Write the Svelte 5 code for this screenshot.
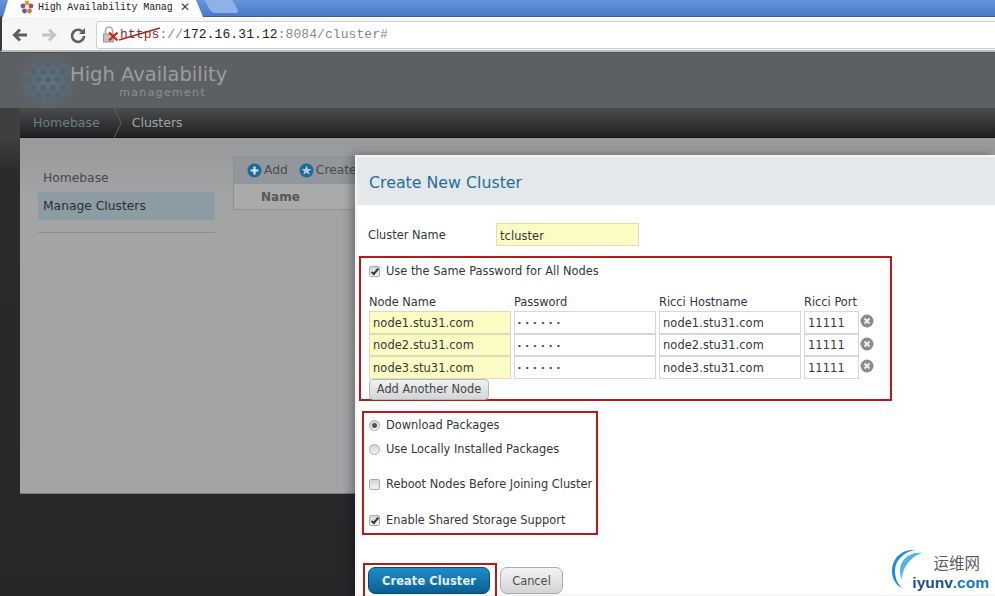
<script>
  const nodes = [
    { name: "node1.stu31.com", port: "11111" },
    { name: "node2.stu31.com", port: "11111" },
    { name: "node3.stu31.com", port: "11111" }
  ];
  // logo dots, laid out as a rounded honeycomb
  const rows = [3, 4, 5, 4, 3];
  const dots = [];
  rows.forEach((count, r) => {
    for (let c = 0; c < count; c++) {
      dots.push({ x: 28 + (c - (count - 1) / 2) * 9.5, y: 11 + r * 7.8 });
    }
  });
</script>

<div class="browser">
  <div class="tabstrip">
    <div class="tab">
      <svg class="favicon" width="14" height="14" viewBox="0 0 14 14">
        <circle cx="7" cy="3" r="2.4" fill="#c9a23c" />
        <circle cx="11" cy="6" r="2.4" fill="#a8506e" />
        <circle cx="9.5" cy="11" r="2.4" fill="#c77a3a" />
        <circle cx="4.5" cy="11" r="2.4" fill="#6a5aa0" />
        <circle cx="3" cy="6" r="2.4" fill="#8f4a8a" />
        <circle cx="7" cy="7" r="1.5" fill="#e8e2d8" />
      </svg>
      <span class="tab-title">High Availability Manag</span>
      <span class="tab-close">✕</span>
    </div>
    <div class="tab-new"></div>
  </div>

  <div class="toolbar">
    <svg class="nav-icon" width="18" height="16" viewBox="0 0 18 16">
      <path d="M16 8H4M9 2.5 3.5 8 9 13.5" fill="none" stroke="#5c5f61" stroke-width="3" />
    </svg>
    <svg class="nav-icon" width="18" height="16" viewBox="0 0 18 16">
      <path d="M2 8h12M9 2.5 14.500 8 9 13.5" fill="none" stroke="#c2c4c5" stroke-width="3" />
    </svg>
    <svg class="nav-icon reload" width="18" height="18" viewBox="0 0 18 18">
      <path d="M14 6.500A6 6 0 1 0 15 10" fill="none" stroke="#5c5f61" stroke-width="2.600" />
      <path d="M16 2v6h-6z" fill="#5c5f61" />
    </svg>
    <div class="urlbar">
      <svg class="lock" width="16" height="18" viewBox="0 0 16 18">
        <path d="M2.500 8V4.500a3.500 3.500 0 0 1 7 0V8" fill="none" stroke="#a9a9a6" stroke-width="1.600" />
        <rect x="0.500" y="8" width="10" height="8" fill="#c4c3bd" stroke="#999" />
        <path d="M6 6.500l8.500 8M14.500 6.500 6 14.500" stroke="#c8281e" stroke-width="2.200" />
      </svg>
      <span class="url">
        <span class="scheme">https<svg class="strike" width="44" height="14" viewBox="0 0 44 14"><path d="M1 13 42 1" stroke="#a8262a" stroke-width="1.500" /></svg></span><span class="dim">://</span>172.16.31.12<span class="dim">:8084/cluster#</span>
      </span>
    </div>
  </div>

  <div class="page">
    <header class="brand">
      <svg class="brand-mark" width="62" height="56" viewBox="0 0 62 56">
        <defs>
          <radialGradient id="glow">
            <stop offset="0" stop-color="#5f7a8c" stop-opacity="0.85" />
            <stop offset="1" stop-color="#5f7a8c" stop-opacity="0" />
          </radialGradient>
        </defs>
        <ellipse cx="28" cy="28" rx="30" ry="28" fill="url(#glow)" />
        {#each dots as d}
          <circle cx={d.x} cy={d.y} r="3.200" fill="#54636d" />
        {/each}
      </svg>
      <div class="brand-text">
        <div class="brand-name">High Availability</div>
        <div class="brand-sub">management</div>
      </div>
    </header>

    <nav class="crumbs">
      <span class="crumb-home">Homebase</span>
      <svg class="crumb-sep" width="10" height="30" viewBox="0 0 10 30">
        <path d="M1 0 8 15 1 30" fill="none" stroke="#5d5f60" />
      </svg>
      <span class="crumb-current">Clusters</span>
    </nav>

    <main class="panel">
      <aside class="sidebar">
        <div class="side-item">Homebase</div>
        <div class="side-item active">Manage Clusters</div>
        <div class="side-rule"></div>
      </aside>
      <section class="table">
        <div class="table-tools">
          <svg width="15" height="15" viewBox="0 0 15 15">
            <circle cx="7.500" cy="7.500" r="7" fill="#1c6a9c" />
            <path d="M7.500 3.500v8M3.500 7.500h8" stroke="#dfe6ea" stroke-width="2.200" />
          </svg>
          <span class="tool-label">Add</span>
          <svg class="tool-gap" width="15" height="15" viewBox="0 0 15 15">
            <circle cx="7.500" cy="7.500" r="7" fill="#1c6a9c" />
            <path d="M7.500 2.500 9 6h3.500l-2.800 2.200 1 3.500-3.200-2-3.200 2 1-3.500L2.500 6H6z" fill="#b9c6cf" />
          </svg>
          <span class="tool-label">Create</span>
        </div>
        <div class="table-head">Name</div>
      </section>
    </main>

    <div class="modal">
      <h2 class="modal-title">Create New Cluster</h2>
      <div class="modal-body">
        <div class="cluster-name">
          <span class="cluster-label">Cluster Name</span>
          <input class="field yellow cluster-input" value="tcluster" />
        </div>

        <div class="mark nodes-box">
          <label class="opt same-pw"><span class="check on"></span>Use the Same Password for All Nodes</label>
          <div class="node-grid">
            <span class="col">Node Name</span>
            <span class="col">Password</span>
            <span class="col">Ricci Hostname</span>
            <span class="col">Ricci Port</span>
            <span></span>
            {#each nodes as n}
              <input class="field yellow" value={n.name} />
              <input class="field pw" type="password" value="secret" />
              <input class="field" value={n.name} />
              <input class="field" value={n.port} />
              <svg class="remove" width="14" height="14" viewBox="0 0 14 14">
                <circle cx="7" cy="7" r="6.500" fill="#8b8b8b" />
                <path d="M4.500 4.500l5 5M9.500 4.500l-5 5" stroke="#eee" stroke-width="2" />
              </svg>
            {/each}
          </div>
          <button class="btn add-node">Add Another Node</button>
        </div>

        <div class="mark options-box">
          <label class="opt"><span class="radio on"></span>Download Packages</label>
          <label class="opt second"><span class="radio"></span>Use Locally Installed Packages</label>
          <label class="opt spaced"><span class="check"></span>Reboot Nodes Before Joining Cluster</label>
          <label class="opt spaced"><span class="check on"></span>Enable Shared Storage Support</label>
        </div>

        <div class="actions">
          <div class="mark action-box"><button class="btn primary">Create Cluster</button></div>
          <button class="btn cancel">Cancel</button>
        </div>
      </div>

      <div class="watermark">
        <svg class="wm-logo" width="40" height="44" viewBox="0 0 40 44">
          <path d="M23 2C8 1 0 12 0 23c0 8 4 14 10 17C5 35 3 29 3 23 3 12 12 4 23 2z" fill="#1d8fd0" />
          <path d="M30 5C18 3 8 12 8 22c0 4 1 7 2 10C10 20 18 9 30 5z" fill="#56b3e2" />
        </svg>
        <div class="wm-text">
          <span class="wm-cn">运维网</span>
          <span class="wm-en"><b>iyunv</b>.com</span>
        </div>
      </div>
    </div>
  </div>
</div>

<style>
  :global(body) {
    margin: 0;
    background: #262729;
    overflow: hidden;
  }

  .browser {
    width: 995px;
    height: 596px;
    overflow: hidden;
    display: flex;
    flex-direction: column;
    font-family: "DejaVu Sans", sans-serif;
  }

  .tabstrip {
    height: 17px;
    flex: none;
    display: flex;
    padding-left: 3px;
    background: linear-gradient(#6595dc, #4b79c9);
    border-bottom: 1px solid #3d5f99;
    box-sizing: border-box;
  }

  .tab {
    width: 200px;
    height: 17px;
    flex: none;
    display: flex;
    align-items: center;
    background: #fdfdfd;
    clip-path: polygon(5px 0, calc(100% - 7px) 0, 100% 100%, 0 100%);
    padding: 0 0 3px 17px;
    box-sizing: border-box;
  }

  .favicon {
    flex: none;
    margin-right: 4px;
  }

  .tab-title {
    font: 10px "Liberation Mono", monospace;
    letter-spacing: -0.15px;
    color: #222;
    width: 134px;
    white-space: nowrap;
    overflow: hidden;
  }

  .tab-close {
    font-size: 12px;
    font-weight: bold;
    color: #444;
    margin-left: 8px;
  }

  .tab-new {
    width: 28px;
    height: 13px;
    margin-left: 5px;
    background: #8db2e8;
    border-radius: 0 0 4px 4px;
    transform: skewX(30deg);
  }

  .toolbar {
    height: 35px;
    flex: none;
    display: flex;
    align-items: center;
    padding: 2px 0 0 9px;
    background: #f6f6f6;
    border-left: 2px solid #3a3b3c;
    border-bottom: 2px solid #b9babb;
    box-sizing: border-box;
  }

  .nav-icon {
    flex: none;
    margin-right: 11px;
  }

  .reload {
    margin-right: 9px;
  }

  .urlbar {
    flex: 1;
    height: 26px;
    margin-right: -4px;
    display: flex;
    align-items: center;
    padding-left: 6px;
    background: #fff;
    border: 1px solid #cfd0d1;
    border-radius: 3px 0 0 3px;
  }

  .lock {
    flex: none;
    margin-right: 1px;
  }

  .url {
    font: 13px "Liberation Mono", monospace;
    letter-spacing: 0.08px;
    color: #222;
    white-space: nowrap;
  }

  .dim {
    color: #85888a;
  }

  .scheme {
    position: relative;
    color: #8c2a2c;
  }

  .strike {
    position: absolute;
    left: -2px;
    top: 0;
  }

  .page {
    position: relative;
    flex: 1;
    display: flex;
    flex-direction: column;
    min-height: 0;
    background: linear-gradient(#3d3f41 0, #3d3f41 86px, #2a2b2d 120px, #262729 100%);
  }

  .brand {
    height: 56px;
    flex: none;
    display: flex;
    background: #5d6063;
    border-top: 1px solid #4f5153;
    box-sizing: border-box;
  }

  .brand-mark {
    margin-left: 20px;
    flex: none;
    margin-right: -12px;
  }

  .brand-text {
    padding-top: 10px;
    text-align: right;
    width: 157px;
    color: #9a9da0;
  }

  .brand-name {
    font-size: 19.500px;
    line-height: 24px;
    white-space: nowrap;
  }

  .brand-sub {
    font-size: 11px;
    line-height: 11px;
    letter-spacing: 1.300px;
    color: #8c8f92;
    padding-right: 21px;
  }

  .crumbs {
    height: 30px;
    flex: none;
    margin-left: 20px;
    display: flex;
    align-items: center;
    font-size: 12.500px;
    background: linear-gradient(#4b4c4e, #1f2021);
    border-bottom: 1px solid #111;
    box-sizing: border-box;
  }

  .crumb-home {
    margin-left: 13px;
    color: #6e7d86;
  }

  .crumb-sep {
    margin-left: 13px;
  }

  .crumb-current {
    margin-left: 9px;
    color: #a2a5a5;
  }

  .panel {
    height: 356px;
    flex: none;
    margin-left: 20px;
    display: flex;
    background: linear-gradient(#98999b, #a3a4a5 60px);
    border-bottom: 1px solid #77797a;
    box-sizing: border-box;
    font-size: 12.300px;
  }

  .sidebar {
    width: 177px;
    margin-left: 18px;
    padding-top: 29px;
    flex: none;
  }

  .side-item {
    height: 22px;
    line-height: 22px;
    padding-left: 5px;
    color: #46494b;
  }

  .side-item.active {
    height: 28px;
    line-height: 29px;
    margin-top: 3px;
    background: #8d9ba4;
    color: #2c2f31;
  }

  .side-rule {
    margin-top: 12px;
    border-top: 1px solid #8d8e8f;
  }

  .table {
    width: 130px;
    height: 54px;
    margin: 18px 0 0 18px;
    flex: none;
    border: 1px solid #8f9091;
    border-right: 0;
    box-sizing: border-box;
    background: #a9aaaa;
  }

  .table-tools {
    height: 27px;
    display: flex;
    align-items: center;
    padding: 0 0 1px 13px;
    box-sizing: border-box;
    background: #92979b;
    white-space: nowrap;
    overflow: hidden;
  }

  .tool-label {
    margin-left: 2px;
    color: #4a4d50;
  }

  .tool-gap {
    flex: none;
    margin-left: 11px;
  }

  .table-head {
    height: 25px;
    line-height: 27px;
    padding-left: 27px;
    font-weight: bold;
    color: #55575a;
    font-size: 12px;
  }

  .modal {
    position: absolute;
    left: 355px;
    top: 103px;
    width: 640px;
    height: 441px;
    background: #fff;
    border: 2px solid #f4f4f4;
    border-right: 0;
    box-sizing: border-box;
    box-shadow: -3px 0 10px rgba(0, 0, 0, 0.35);
    color: #33363a;
    font-size: 11.400px;
  }

  .modal-title {
    margin: 0;
    height: 48px;
    line-height: 52px;
    padding-left: 12px;
    background: #e4e8eb;
    color: #1f6f95;
    font-size: 15.800px;
    font-weight: normal;
  }

  .modal-body {
    padding: 18px 0 0 2px;
  }

  .cluster-name {
    display: flex;
    align-items: center;
    height: 23px;
    padding-left: 9px;
  }

  .cluster-label {
    width: 128px;
    padding-top: 1px;
  }

  .field {
    height: 23px;
    padding: 1px 3px 0;
    box-sizing: border-box;
    width: 100%;
    min-width: 0;
    font: 11.400px "DejaVu Sans", sans-serif;
    letter-spacing: 0.100px;
    color: #33363a;
    background: #fff;
    border: 1px solid #d5d8d8;
    border-radius: 0;
    outline: none;
  }

  .yellow {
    background: #fbfbc4;
    border-color: #dcdcb8;
  }

  .cluster-input {
    width: 143px;
    padding-top: 3px;
  }

  .mark {
    border: 2px solid #b8191d;
    box-sizing: border-box;
  }

  .nodes-box {
    width: 533px;
    height: 145px;
    margin-top: 10px;
    padding: 5px 0 0 8px;
  }

  .opt {
    display: flex;
    align-items: center;
    height: 16px;
    white-space: nowrap;
  }

  .check,
  .radio {
    flex: none;
    width: 9px;
    height: 9px;
    margin-right: 6px;
    position: relative;
    background: linear-gradient(#d4d5d6, #f2f2f2);
    border: 1px solid #a9abac;
  }

  .check {
    border-radius: 2px;
  }

  .radio {
    border-radius: 50%;
  }

  .check.on::after {
    content: "";
    position: absolute;
    left: 3px;
    top: 0;
    width: 2px;
    height: 6px;
    border: solid #333;
    border-width: 0 2px 2px 0;
    transform: rotate(40deg);
  }

  .radio.on::after {
    content: "";
    position: absolute;
    left: 2px;
    top: 2px;
    width: 5px;
    height: 5px;
    border-radius: 50%;
    background: #555;
  }

  .node-grid {
    display: grid;
    grid-template-columns: 142px 142px 142px 55px 14px;
    column-gap: 3px;
    align-items: center;
    margin-top: 16px;
  }

  .node-grid .field {
    height: 22.500px;
  }

  .col {
    height: 16px;
    line-height: 15px;
    white-space: nowrap;
  }

  .remove {
    margin: -2px 0 0 -2px;
  }

  .pw {
    font-family: "Liberation Sans", sans-serif;
    font-size: 8px;
    letter-spacing: 5px;
  }

  .btn {
    font: 11.400px "DejaVu Sans", sans-serif;
    box-sizing: border-box;
    padding: 0;
    cursor: pointer;
  }

  .add-node {
    display: block;
    width: 120px;
    height: 21px;
    color: #444;
    background: linear-gradient(#f1f2f2, #d3d5d6);
    border: 1px solid #b5b7b8;
    border-radius: 4px;
  }

  .options-box {
    width: 236px;
    height: 124px;
    margin: 10px 0 0 3px;
    padding: 4px 0 0 5px;
  }

  .second {
    margin-top: 8px;
  }

  .spaced {
    margin-top: 19px;
  }

  .spaced:last-child {
    margin-top: 20px;
  }

  .actions {
    display: flex;
    align-items: flex-start;
    margin: 28px 0 0 4px;
  }

  .action-box {
    width: 134px;
    height: 40px;
    padding: 2px 0 0 3px;
  }

  .primary {
    width: 122px;
    height: 27px;
    color: #e4f0f6;
    font-weight: bold;
    letter-spacing: 0.100px;
    background: linear-gradient(#1e8dc6, #0a5f93);
    border: 1px solid #0c4a70;
    border-radius: 7px;
  }

  .cancel {
    width: 63px;
    height: 27px;
    margin: 4px 0 0 3px;
    color: #4a4c4e;
    background: linear-gradient(#f3f3f3, #d3d4d5);
    border: 1px solid #a9abac;
    border-radius: 7px;
  }

  .watermark {
    position: absolute;
    right: 6px;
    bottom: 0;
    width: 97px;
    height: 46px;
    display: flex;
    align-items: flex-end;
    background: #fff;
  }

  .wm-logo {
    flex: none;
    align-self: flex-start;
  }

  .wm-text {
    flex: 1;
    display: flex;
    flex-direction: column;
    align-items: flex-end;
    margin-left: -40px;
    padding-bottom: 3px;
  }

  .wm-cn {
    font: 15.500px/20px "Noto Sans CJK SC", sans-serif;
    color: #5a5d60;
    margin-bottom: 2px;
    padding-right: 9px;
  }

  .wm-en {
    font: bold 15.500px/17px "Liberation Sans", sans-serif;
    color: #1777b8;
    white-space: nowrap;
  }

  .wm-en b {
    color: #1c4f86;
  }
</style>
